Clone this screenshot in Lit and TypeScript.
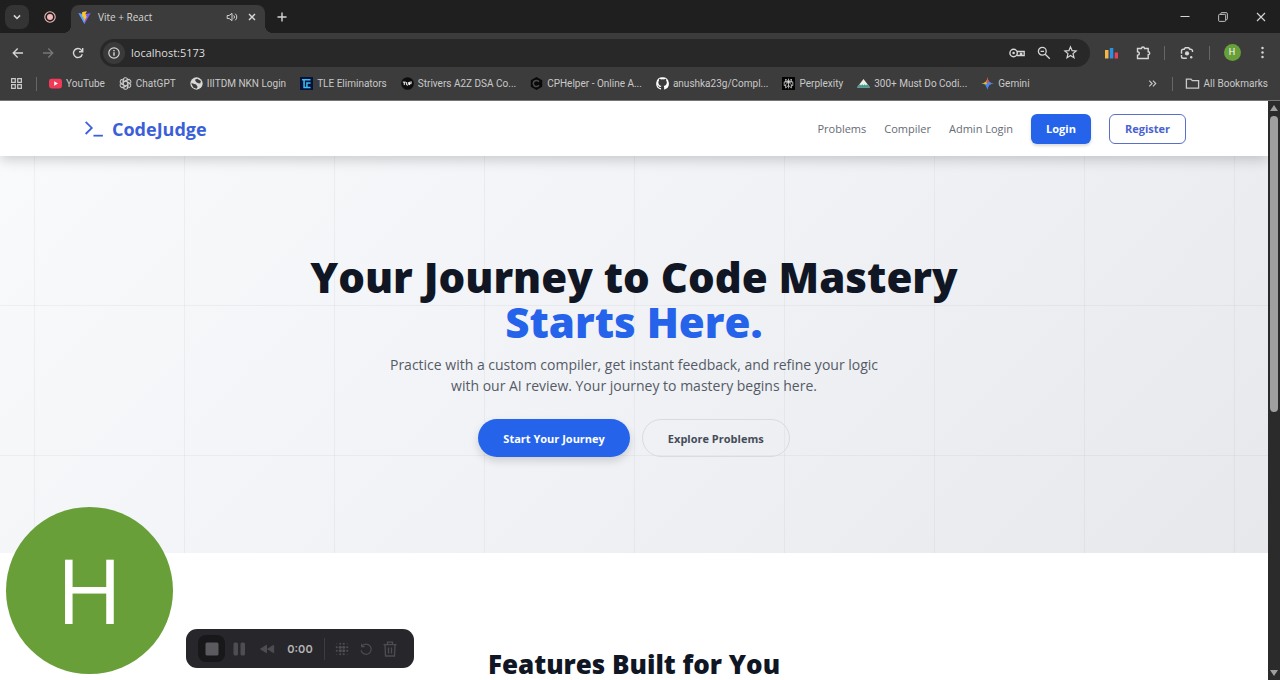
import { LitElement, html, css, svg } from "lit";
import { customElement } from "lit/decorators.js";

const line = (body: unknown, size = 16, cls = "") => html`
  <svg class="ico ${cls}" width=${size} height=${size} viewBox="0 0 16 16" aria-hidden="true">${body}</svg>`;

const icons = {
  chevron: svg`<path d="M4.500 6.200 8 9.700l3.500-3.500" stroke-width="1.800"/>`,
  record: svg`<circle cx="8" cy="8" r="5.200" stroke-width="1.100"/><circle cx="8" cy="8" r="3" fill="currentColor" stroke="none"/>`,
  vite: svg`<path d="M1.500 3.200 8 14.800l6.600-11.600L8 4.400z" fill="#7a5cf0" stroke="none"/><path d="M1.500 3.200 8 14.800 7.200 5z" fill="#4fa5f5" stroke="none"/><path d="m10.600 1.200-5 1-.3 5 1.600-.4-.5 2.500 1.400-.4-.6 4 3.600-6.300-1.500.3.8-2.400-1.500.3z" fill="#ffc62e" stroke="none"/>`,
  sound: svg`<path d="M2.500 6.300h2.200L8 3.800v8.400L4.700 9.700H2.500z" stroke-width="1.100"/><path d="M10 6.200a2.500 2.500 0 0 1 0 3.600M11.700 4.200a5 5 0 0 1 0 7.600" stroke-width="1.100"/>`,
  close: svg`<path d="m4 4 8 8m0-8-8 8" stroke-width="1.900"/>`,
  plus: svg`<path d="M8 3.500v9M3.500 8h9" stroke-width="1.400"/>`,
  min: svg`<path d="M3.500 7.500h9"/>`,
  max: svg`<rect x="3" y="5" width="8" height="8" rx="1"/><path d="M5.500 5V4a1 1 0 0 1 1-1H11.500a1.500 1.500 0 0 1 1.500 1.500v5.500a1 1 0 0 1-1 1h-1"/>`,
  exit: svg`<path d="m4 4 8 8m0-8-8 8" stroke-width="1.100"/>`,
  back: svg`<path d="M13 8H3.300m4.400-4.500L3.200 8l4.500 4.500" stroke-width="1.300"/>`,
  forward: svg`<path d="M3 8h9.700M8.300 3.500 12.800 8l-4.500 4.500" stroke-width="1.300"/>`,
  reload: svg`<path d="M12.300 9.300a4.500 4.500 0 1 1-.9-4.200l1 1.200" stroke-width="1.400"/><path d="M12.700 3v3.700H9" stroke-width="1.400"/>`,
  info: svg`<circle cx="8" cy="8" r="5.200" stroke-width="1.200"/><path d="M8 7.300v3.400M8 5v1.200" stroke-width="1.400"/>`,
  key: svg`<circle cx="4.600" cy="8" r="3.700" stroke-width="1.400"/><circle cx="4.600" cy="8" r="1.300" fill="currentColor" stroke="none"/><path d="M8 6.500h7.200v4h-2.500V8.500h-1.200v2H8" stroke-width="1.300"/>`,
  zoomOut: svg`<circle cx="6.300" cy="6.300" r="3.900" stroke-width="1.300"/><path d="m9.200 9.200 4.600 4.600M4.600 6.300H8" stroke-width="1.300"/>`,
  star: svg`<path d="m8 2 1.700 4 4.300.4-3.300 2.800 1 4.300L8 11.200l-3.700 2.300 1-4.300L2 6.400 6.300 6z" stroke-width="1.300"/>`,
  bars: svg`<path d="M1 5h3.500v8.500H1z" fill="#f2b64a" stroke="none"/><path d="M5.800 3h3.500v10.500H5.800z" fill="#2f8fe0" stroke="none"/><path d="M10.700 7.500h3.300v6h-3.300z" fill="#ea4157" stroke="none"/>`,
  puzzle: svg`<path d="M2.500 3.500h4a1.500 1.500 0 0 1 3 0h3.700v3.300a1.500 1.500 0 0 1 0 3v3.700H2.500v-3.200a1.800 1.800 0 0 0 0-3.600z" stroke-width="1.400"/>`,
  lens: svg`<path d="M2.500 8.700V6a1.800 1.800 0 0 1 1.800-1.800h1L6.300 2.700h3.400l1 1.500h1A1.800 1.800 0 0 1 13.500 6v1M2.500 10v1.500a1.800 1.800 0 0 0 1.800 1.800h3.500" stroke-width="1.400"/><circle cx="8" cy="8.400" r="2.100" fill="currentColor" stroke="none"/><circle cx="12.200" cy="12.300" r="1.200" fill="currentColor" stroke="none"/>`,
  dots: svg`<g fill="currentColor" stroke="none"><circle cx="8" cy="2.500" r="1.500"/><circle cx="8" cy="8" r="1.500"/><circle cx="8" cy="13.500" r="1.500"/></g>`,
  apps: svg`<path d="M2 2h4.500v4.500H2zM9.500 2H14v4.500H9.500zM2 9.500h4.500V14H2zM9.500 9.500H14V14H9.500z" stroke-width="1.500"/>`,
  more: svg`<path d="m4 4.500 3.500 3.500L4 11.500M8.500 4.500 12 8l-3.500 3.500" stroke-width="1.400"/>`,
  folder: svg`<path d="M1.500 3.300h4.800l1.500 1.700h6.700v8h-13z" stroke-width="1.400"/>`,
  prompt: svg`<path d="m1.500 1.500 5.500 5.500-5.500 5.500" stroke-width="1.600"/><path d="M8.500 14H17" stroke-width="1.600"/>`,
  stop: svg`<rect x="1.500" y="1.500" width="13" height="13" rx="1.500" fill="currentColor" stroke="none"/>`,
  pause: svg`<rect x="2.500" y="1.500" width="4.500" height="13" rx="1.500" fill="currentColor" stroke="none"/><rect x="9.500" y="1.500" width="4.500" height="13" rx="1.500" fill="currentColor" stroke="none"/>`,
  rewind: svg`<path d="m7.500 4.300-6 3.700 6 3.700zM14.700 4.300l-6 3.700 6 3.700z" fill="currentColor" stroke-width="1" stroke-linejoin="round"/>`,
  grid: svg`<g fill="currentColor" stroke="none">${[2, 6, 10, 14].map((x) => [2, 6, 10, 14].map((y) => svg`<circle cx=${x} cy=${y} r=${(x === 2 || x === 14) && (y === 2 || y === 14) ? 0.6 : x === 2 || x === 14 || y === 2 || y === 14 ? 1.2 : 1.8}/>`))}</g>`,
  restart: svg`<path d="M3.300 5A5.800 5.800 0 1 1 2.400 9.500" stroke-width="1.300"/><path d="M3 2v3.300h3.300" stroke-width="1.300"/>`,
  trash: svg`<path d="M1.500 3.700h13M5.500 3.700V1.200h5v2.500M3 3.700l.5 11.300h9l.5-11.300M6.500 6.500v6M9.500 6.500v6" stroke-width="1.300"/>`,
};

const favicons = {
  youtube: svg`<rect x="0" y="2" width="16" height="12" rx="3" fill="#f03a57" stroke="none"/><path d="m6.400 5.300 4.600 2.700-4.600 2.700z" fill="#fff" stroke="none"/>`,
  chatgpt: svg`<g stroke-width="1.300">${[0, 60, 120, 180, 240, 300].map((a) => svg`<path d="M5 8.700V3.800A3 3 0 0 1 10.600 2.400M5.200 6.500l4.300-2.500a3 3 0 0 1 2.500-.3" transform="rotate(${a} 8 8)"/>`)}</g>`,
  globe: svg`<circle cx="8" cy="8" r="7.600" fill="#d8d8d8" stroke="none"/><path d="M1.500 8c2-1 3 .8 5 1s1.500 2 2.500 2.500-.5 2.500-1 3L4 13zM6 3.500 9 2l4.500 3-1 3-3-.5L7.500 6z" fill="#3c3c3c" stroke="none"/>`,
  tle: svg`<rect width="16" height="16" fill="#07123a" stroke="none"/><path d="M2.500 3.300h10.500M5 3.300v9.500h8M8.500 12.800V7.500H13" stroke="#38bdf0" stroke-width="1.900"/>`,
  tuf: svg`<circle cx="8" cy="8" r="7.800" fill="#0d0d0d" stroke="none"/><path d="M2.300 6.300h3.500M4 6.300v3.600M6.600 6.300v2.500q0 1.200 1.200 1.200T9 8.800V6.300M10.500 10V6.300h3M10.500 8.200H13" stroke="#fff" stroke-width="1.200"/>`,
  cph: svg`<path d="m8 0 7 4v8l-7 4-7-4V4z" fill="#090909" stroke="none"/><path d="M11 5.800a3.800 3.800 0 1 0 0 4.400" stroke="#4c4c4c" stroke-width="1.900"/>`,
  github: svg`<path d="M8 .3a7.700 7.700 0 0 0-2.500 15c.4.100.6-.2.600-.4v-1.500c-2.100.4-2.700-.6-2.900-1.100-.1-.300-.6-1-1-1.200-.4-.2-.8-.7 0-.7.700 0 1.200.6 1.400.9.800 1.400 2.100 1 2.600.8.100-.6.300-1 .6-1.200-1.900-.2-3.900-1-3.900-4.200 0-.9.300-1.700.9-2.300-.1-.2-.4-1.100.1-2.200 0 0 .7-.2 2.200.9a7.500 7.500 0 0 1 4 0c1.500-1.100 2.200-.9 2.200-.9.500 1.100.2 2 .1 2.200.5.600.9 1.300.9 2.300 0 3.200-2 4-3.900 4.200.3.300.6.800.6 1.600v2.400c0 .2.100.5.600.4A7.700 7.700 0 0 0 8 .3z" fill="#fff" stroke="none"/>`,
  perplexity: svg`<rect width="16" height="16" fill="#050505" stroke="none"/><path d="M8 2v12M4.500 2.500 8 6l3.500-3.500V6h-7zM2.700 6h10.600v4.500h-1.800M4.500 10.500H2.700V6M8 6l-3.500 3.500v4L8 10.300l3.500 3.200v-4z" stroke="#e6e6e6" stroke-width=".9"/>`,
  mountain: svg`<path d="M8 2.500 0 13h16z" fill="#eef0e4" stroke="none"/><path d="M0 13l3.500-4L5 10.500 6.500 9 8 10.500 9.500 9l1.500 1.500L12.500 9 16 13z" fill="#3f9c93" stroke="none"/>`,
  gemini: svg`<path d="M8 0Q8.600 7.400 16 8 8 8 8 8z" fill="#e3504a" stroke="none"/><path d="M16 8Q8.600 8.600 8 16V8z" fill="#3f83f2" stroke="none"/><path d="M8 16Q7.400 8.600 0 8h8z" fill="#4fae5d" stroke="none"/><path d="M0 8Q7.400 7.400 8 0v8z" fill="#e8b53c" stroke="none"/><path d="M8 3 11.500 7 15 8 9.500 9.500 8 15 5.500 10 6.500 7z" fill="#4a86ee" stroke="none"/><path d="M8 1.500 10 6.500 8 7.500 6.500 6.500z" fill="#e3504a" stroke="none"/><path d="M1.500 8 6.500 6.500 7.500 8 6.500 9z" fill="#e8b53c" stroke="none"/>`,
};

const bookmarks = [
  { icon: favicons.youtube, label: "YouTube" },
  { icon: favicons.chatgpt, label: "ChatGPT" },
  { icon: favicons.globe, label: "IIITDM NKN Login" },
  { icon: favicons.tle, label: "TLE Eliminators" },
  { icon: favicons.tuf, label: "Strivers A2Z DSA Co..." },
  { icon: favicons.cph, label: "CPHelper - Online A..." },
  { icon: favicons.github, label: "anushka23g/Compl..." },
  { icon: favicons.perplexity, label: "Perplexity" },
  { icon: favicons.mountain, label: "300+ Must Do Codi..." },
  { icon: favicons.gemini, label: "Gemini" },
];

const shared = css`
  *, *::before, *::after { box-sizing: border-box; }
  button { font: inherit; color: inherit; border: 0; padding: 0; background: none; cursor: pointer; }
  a { color: inherit; text-decoration: none; }
  h1, h2, p { margin: 0; }
  .ico { display: block; flex: none; fill: none; stroke: currentColor; }
`;

@customElement("browser-chrome")
class BrowserChrome extends LitElement {
  static styles = [shared, css`
    :host { display: block; flex: none; background: #3c3c3c; color: #d6d6d6; font: 11px/16px "Open Sans", sans-serif; border-bottom: 1px solid #77757a; }
    button { display: grid; place-items: center; flex: none; }
    .tabs { height: 33px; background: #1f1f1f; display: flex; align-items: flex-end; }
    .tabs > button { height: 33px; }
    .search { width: 34px; display: grid; place-items: center; height: 33px; }
    .search button { width: 24px; height: 24px; border-radius: 8px; background: #343434; }
    .pinned { width: 32px; color: #f3b9b9; }
    .tab { position: relative; width: 194px; height: 28px; margin-left: 5px; padding: 0 6px 4px; border-radius: 8px 8px 0 0; background: #3c3c3c; display: flex; align-items: center; gap: 6px; }
    .tab::before, .tab::after { content: ""; position: absolute; bottom: 0; width: 8px; height: 8px; }
    .tab::before { left: -8px; background: radial-gradient(circle at 0 0, #1f1f1f 8px, #3c3c3c 8px); }
    .tab::after { right: -8px; background: radial-gradient(circle at 100% 0, #1f1f1f 8px, #3c3c3c 8px); }
    .title { flex: 1; font-size: 10px; }
    .tab button { width: 14px; }
    .new { width: 34px; }
    .space { flex: 1; }
    .window { width: 38px; }
    .toolbar { height: 39px; display: flex; align-items: center; padding: 0 10px 0 3px; }
    .toolbar > button { width: 30px; height: 30px; }
    .toolbar .off { color: #777; }
    .omni { flex: 1; height: 28px; margin-left: 7px; border-radius: 14px; background: #282828; display: flex; align-items: center; padding: 0 6px 0 3px; }
    .omni button { width: 27px; }
    .omni .info { width: 22px; height: 22px; border-radius: 11px; background: #3a3a3a; }
    input { flex: 1; min-width: 0; border: 0; outline: 0; padding: 0 6px; background: none; color: #dedede; font: 11px/16px "Open Sans", sans-serif; }
    .rule { width: 1px; height: 14px; background: #666; flex: none; }
    .toolbar .ext { width: 31px; margin-left: 6px; }
    .toolbar .ext + button { width: 31px; margin-right: 6px; }
    .toolbar .lens { width: 44px; }
    .toolbar .user { width: 44px; }
    .face { width: 17px; height: 17px; border-radius: 9px; background: #689f38; color: #fff; font: 9px/17px Roboto, sans-serif; }
    .toolbar .menu { width: 16px; }
    .marks { height: 28px; padding: 0 12px 5px 10px; display: flex; align-items: center; gap: 14px; font: 10px/16px Roboto, sans-serif; color: #c9c9c9; white-space: nowrap; }
    .marks nav { display: flex; gap: 14px; flex: 1; min-width: 0; }
    .marks a { display: flex; align-items: center; gap: 4px; }
    .marks .rule { margin: 0 -2px 0 -1px; }
  `];

  render() {
    return html`
      <div class="tabs">
        <div class="search"><button aria-label="Search tabs">${line(icons.chevron, 14)}</button></div>
        <button class="pinned" aria-label="Recording tab">${line(icons.record)}</button>
        <div class="tab">
          ${line(icons.vite, 15)}<span class="title">Vite + React</span>
          <button aria-label="Mute tab">${line(icons.sound, 14)}</button>
          <button aria-label="Close tab">${line(icons.close, 12)}</button>
        </div>
        <button class="new" aria-label="New tab">${line(icons.plus)}</button>
        <span class="space"></span>
        <button class="window" aria-label="Minimize">${line(icons.min)}</button>
        <button class="window" aria-label="Restore">${line(icons.max, 14)}</button>
        <button class="window" aria-label="Close">${line(icons.exit)}</button>
      </div>
      <div class="toolbar">
        <button aria-label="Back">${line(icons.back)}</button>
        <button class="off" aria-label="Forward">${line(icons.forward)}</button>
        <button aria-label="Reload">${line(icons.reload)}</button>
        <div class="omni">
          <button class="info" aria-label="Site information">${line(icons.info)}</button>
          <input aria-label="Address" value="localhost:5173" />
          <button aria-label="Passwords">${line(icons.key)}</button>
          <button aria-label="Zoom">${line(icons.zoomOut)}</button>
          <button aria-label="Bookmark this page">${line(icons.star, 15)}</button>
        </div>
        <button class="ext" aria-label="Extension">${line(icons.bars)}</button>
        <button aria-label="Extensions">${line(icons.puzzle)}</button>
        <span class="rule"></span>
        <button class="lens" aria-label="Search with Lens">${line(icons.lens)}</button>
        <span class="rule"></span>
        <button class="user" aria-label="Profile"><span class="face">H</span></button>
        <button class="menu" aria-label="Menu">${line(icons.dots, 13)}</button>
      </div>
      <div class="marks">
        <button aria-label="Apps">${line(icons.apps, 13)}</button>
        <span class="rule"></span>
        <nav aria-label="Bookmarks">
          ${bookmarks.map((b) => html`<a href="#">${line(b.icon, 13)}<span>${b.label}</span></a>`)}
        </nav>
        <button aria-label="More bookmarks">${line(icons.more, 13)}</button>
        <span class="rule"></span>
        <a href="#">${line(icons.folder, 15)}<span>All Bookmarks</span></a>
      </div>`;
  }
}

@customElement("judge-page")
class JudgePage extends LitElement {
  static styles = [shared, css`
    :host { display: block; flex: 1; min-width: 0; overflow: hidden; background: #fff; font-family: "Open Sans", sans-serif; }
    .nav { position: relative; background: #fff; box-shadow: 0 4px 12px rgb(0 0 0 / 18%); }
    .inner { max-width: 1104px; height: 55px; margin: 0 auto; padding-left: 2px; display: flex; align-items: center; justify-content: space-between; }
    .brand { display: flex; align-items: center; gap: 8px; color: #3b5fd9; font-size: 18px; line-height: 28px; font-weight: 700; }
    .links { display: flex; align-items: center; gap: 18px; font-size: 11px; line-height: 18px; color: #666b75; }
    .btn { height: 30px; padding: 0 15px; border-radius: 6px; font-weight: 700; }
    .solid { background: #2563eb; color: #fff; box-shadow: 0 2px 3px rgb(0 0 0 / 15%); }
    .outline { border: 1px solid #5a6fc8; color: #4a63d0; }
    .hero {
      min-height: 397px; padding: 98px 24px 96px; display: flex; flex-direction: column; align-items: center; text-align: center;
      background:
        linear-gradient(90deg, rgb(0 0 0 / 4%) 1px, transparent 1px) calc(50% - 75px) 0 / 150px 150px,
        linear-gradient(0deg, rgb(0 0 0 / 4%) 1px, transparent 1px) 0 0 / 150px 150px,
        linear-gradient(135deg, #f9fafb, #f0f2f6 50%, #e7e8ec);
    }
    h1 { font-size: 42px; line-height: 45px; font-weight: 800; color: #101624; }
    h1 span { display: block; color: #2563eb; }
    .lead { max-width: 504px; margin-top: 10px; font-size: 14px; line-height: 21px; color: #555b66; }
    .actions { display: flex; gap: 12px; margin-top: 23px; }
    .pill { height: 38px; padding: 0 25px; border-radius: 19px; font-size: 11px; font-weight: 700; }
    .ghost { border: 1px solid #d9dbe0; color: #454c58; }
    .pill.solid { box-shadow: 0 4px 8px rgb(0 0 0 / 15%); }
    .features { padding: 96px 24px; text-align: center; }
    h2 { font-size: 26px; line-height: 30px; font-weight: 800; color: #101624; }
  `];

  render() {
    return html`
      <header class="nav">
        <div class="inner">
          <a class="brand" href="#"><svg class="ico" width="20" height="18" viewBox="0 0 18 16" aria-hidden="true">${icons.prompt}</svg>CodeJudge</a>
          <nav class="links">
            <a href="#">Problems</a><a href="#">Compiler</a><a href="#">Admin Login</a>
            <button class="btn solid">Login</button>
            <button class="btn outline">Register</button>
          </nav>
        </div>
      </header>
      <section class="hero">
        <h1>Your Journey to Code Mastery <span>Starts Here.</span></h1>
        <p class="lead">Practice with a custom compiler, get instant feedback, and refine your logic with our AI review. Your journey to mastery begins here.</p>
        <div class="actions">
          <button class="pill solid">Start Your Journey</button>
          <button class="pill ghost">Explore Problems</button>
        </div>
      </section>
      <section class="features"><h2>Features Built for You</h2></section>`;
  }
}

@customElement("screen-recorder")
class ScreenRecorder extends LitElement {
  static styles = [shared, css`
    :host { position: absolute; left: 6px; bottom: 6px; display: flex; align-items: flex-end; gap: 13px; }
    .avatar { width: 167px; height: 167px; border-radius: 50%; background: #689f38; color: #fff; font: 90px/164px "Open Sans", sans-serif; text-align: center; }
    .bar { height: 39px; margin-bottom: 6px; padding: 0 12px; border-radius: 11px; background: #27262a; color: #4e4d52; display: flex; align-items: center; }
    button { display: grid; place-items: center; width: 28px; height: 26px; }
    .stop { width: 27px; height: 27px; border-radius: 8px; background: #18171a; color: #5b5a5e; }
    .time { width: 38px; text-align: center; color: #b4b4b6; font: 600 11px/16px Inter, sans-serif; }
    .rule { width: 1px; height: 22px; margin: 0 5px; background: #3d3c40; }
    .tool { width: 24px; }
  `];

  render() {
    return html`
      <div class="avatar">H</div>
      <div class="bar">
        <button class="stop" aria-label="Stop">${line(icons.stop)}</button>
        <button aria-label="Pause">${line(icons.pause)}</button>
        <button aria-label="Rewind">${line(icons.rewind)}</button>
        <span class="time">0:00</span>
        <span class="rule"></span>
        <button class="tool" aria-label="Effects">${line(icons.grid, 14)}</button>
        <button class="tool" aria-label="Restart">${line(icons.restart, 14)}</button>
        <button class="tool" aria-label="Delete">${line(icons.trash)}</button>
      </div>`;
  }
}

@customElement("app-root")
class AppRoot extends LitElement {
  static styles = [shared, css`
    :host { position: relative; display: flex; flex-direction: column; height: 100vh; overflow: hidden; }
    .view { flex: 1; min-height: 0; display: flex; }
    .scroll { flex: none; width: 12px; background: #2b2b2b; display: flex; flex-direction: column; align-items: center; padding: 4px 0; gap: 5px; }
    .arrow { width: 0; border: 4px solid transparent; border-top: 0; border-bottom: 6px solid #9f9f9f; }
    .arrow.down { border-top: 6px solid #9f9f9f; border-bottom: 0; }
    .track { flex: 1; }
    .thumb { width: 8px; height: 54%; border-radius: 4px; background: #9f9f9f; }
  `];

  render() {
    return html`
      <browser-chrome></browser-chrome>
      <div class="view">
        <judge-page></judge-page>
        <div class="scroll"><span class="arrow"></span><div class="track"><div class="thumb"></div></div><span class="arrow down"></span></div>
      </div>
      <screen-recorder></screen-recorder>`;
  }
}
